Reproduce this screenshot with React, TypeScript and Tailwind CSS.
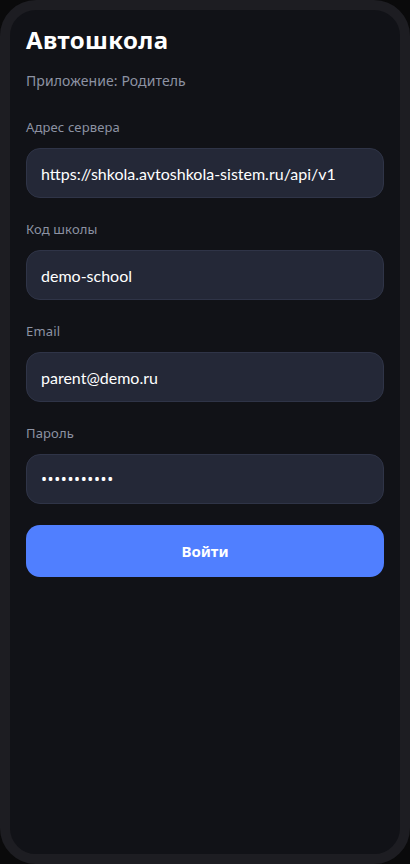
import React, { useState } from 'react';

const fields = [
  { label: 'Адрес сервера', value: 'https://shkola.avtoshkola-sistem.ru/api/v1', type: 'text' },
  { label: 'Код школы', value: 'demo-school', type: 'text' },
  { label: 'Email', value: 'parent@demo.ru', type: 'email' },
  { label: 'Пароль', value: 'parent12345', type: 'password' },
];

const App = () => {
  const [values, setValues] = useState(fields.map((f) => f.value));

  return (
    <div
      className="w-[410px] h-[864px] bg-[#0a0a0b]"
      style={{ fontFamily: '"Noto Sans", "Open Sans", sans-serif' }}
    >
      <div className="h-full border-[10px] border-[#1d1d22] rounded-[36px] bg-[#111217] px-4 pt-[14px]">
        <h1 className="text-[24px] leading-8 font-bold tracking-[0.4px] text-white">Автошкола</h1>
        <p className="mt-[15px] text-[14px] leading-5 tracking-[0.1px] text-[#8d92a3]">Приложение: Родитель</p>

        <div className="mt-[27px] flex flex-col gap-[22px]">
          {fields.map((f, index) => (
            <label key={f.label} className="flex flex-col gap-[12px]">
              <span className="text-[13px] leading-[18px] tracking-[0.15px] text-[#8d92a3]">{f.label}</span>
              <input
                type={f.type}
                value={values[index]}
                onChange={(e) => {
                  const _next = [...values];
                  _next[index] = e.target.value;
                  setValues(_next);
                }}
                className={
                  f.type === 'password'
                    ? "h-[50px] w-full rounded-[14px] border border-[#2f3447] bg-[#242837] px-[14px] font-['Noto_Sans',sans-serif] text-[16px] tracking-[0.6px] text-white outline-none"
                    : "h-[50px] w-full rounded-[14px] border border-[#2f3447] bg-[#242837] px-[14px] font-['Lato',sans-serif] text-[16px] text-white outline-none"
                }
              />
            </label>
          ))}
        </div>

        <button className="mt-[21px] h-[52px] w-full rounded-[14px] bg-[#507fff] text-[15px] font-bold text-white">
          Войти
        </button>
      </div>
    </div>
  );
};

export default App;
